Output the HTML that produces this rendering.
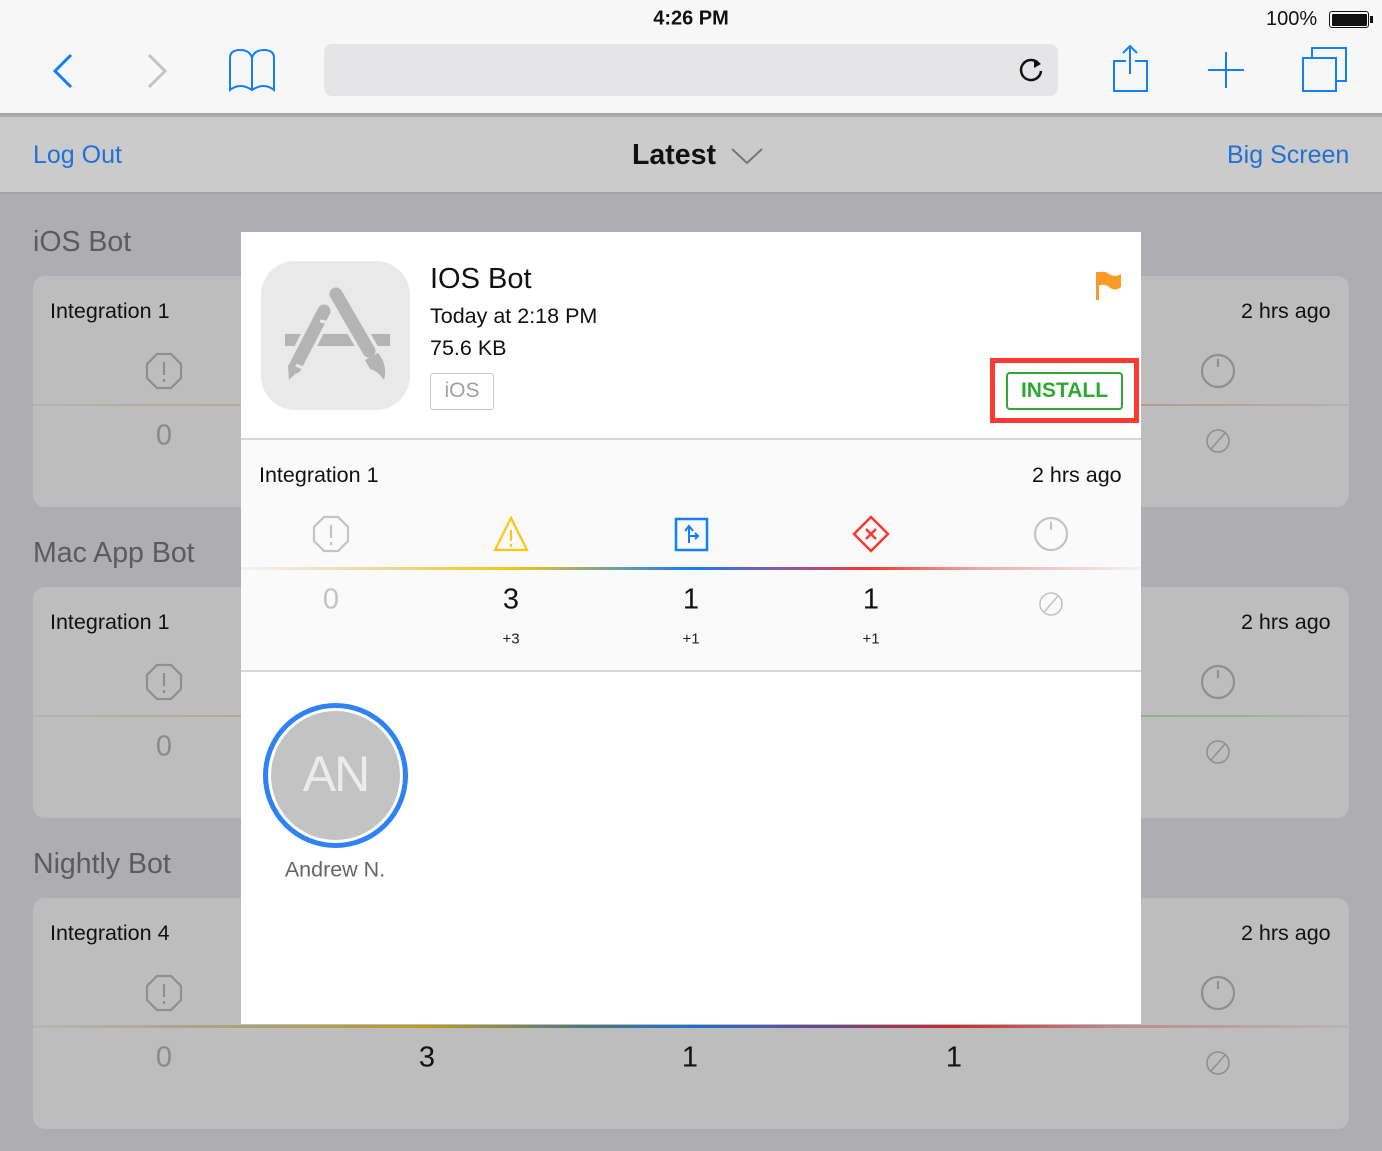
<!DOCTYPE html>
<html><head><meta charset="utf-8"><style>
*{margin:0;padding:0;box-sizing:border-box}
body{width:1382px;height:1151px;position:relative;overflow:hidden;background:#aeadb2;font-family:"Liberation Sans",sans-serif;}
.a{position:absolute}
.c{position:absolute;transform:translate(-50%,-50%);text-align:center;white-space:nowrap}
.card{position:absolute;left:33px;width:1316px;height:231px;background:#bdbdbd;border-radius:12px}
.sec{position:absolute;left:33px;font-size:28.5px;color:#5c5c5e}
.it{font-size:21.5px;color:#111}
.gray{color:#8a8a8a}
</style></head><body>
<div class="a" style="left:0;top:0;width:1382px;height:115px;background:#f7f7f7;border-bottom:2px solid #a6a6a6"></div>
<div class="c" style="left:691px;top:19px;font-size:20px;font-weight:bold;color:#111">4:26 PM</div>
<div class="a" style="left:1266px;top:8px;font-size:20px;color:#111">100%</div>
<div class="a" style="left:1329px;top:11px;width:40px;height:17px;border:1.5px solid #111;border-radius:3px;padding:1.5px"><div style="width:100%;height:100%;background:#111;border-radius:1px"></div></div>
<div class="a" style="left:1370px;top:16px;width:3px;height:7px;background:#111"></div>
<svg class="a" style="left:0;top:0" width="1382" height="115">
<g fill="none" stroke="#147efb" stroke-width="2.5">
<path d="M71 55 L55 71 L71 87" stroke-width="3"/>
<path d="M230 58 Q230 50 240 50 Q250 50 252 58 Q254 50 264 50 Q274 50 274 58 L274 90 Q264 82 252 90 Q240 82 230 90 Z" stroke-width="2"/>
<path d="M252 58 L252 90" stroke-width="2"/>
<path d="M1126 61 L1114 61 L1114 91 L1147 91 L1147 61 L1135 61" stroke-width="2"/>
<path d="M1130 46 L1130 74 M1123 53 L1130 46 L1137 53" stroke-width="2"/>
<path d="M1226 52 L1226 88 M1208 70 L1244 70" stroke-width="2"/>
<rect x="1303" y="58" width="33" height="33" stroke-width="2"/>
<path d="M1312 58 L1312 48 L1346 48 L1346 81 L1336 81" stroke-width="2"/>
</g>
<path d="M149 55 L165 71 L149 87" fill="none" stroke="#c4c4c4" stroke-width="3"/>
</svg>
<div class="a" style="left:324px;top:44px;width:734px;height:52px;background:#e5e5e7;border-radius:8px"></div>
<svg class="a" style="left:1017px;top:55px" width="30" height="30"><path d="M22 9 A10 10 0 1 0 24 16" fill="none" stroke="#111" stroke-width="2.5"/><path d="M17 4 L24 9 L17 13 Z" fill="#111"/></svg>
<div class="a" style="left:0;top:117px;width:1382px;height:77px;background:#cbcbcb;border-bottom:2px solid #a3a3a3"></div>
<div class="a" style="left:33px;top:141px;font-size:25px;color:#2271d6">Log Out</div>
<div class="a" style="left:1227px;top:141px;font-size:25px;color:#2271d6">Big Screen</div>
<div class="a" style="left:632px;top:139px;font-size:28.5px;font-weight:bold;color:#111">Latest</div>
<svg class="a" style="left:730px;top:146px" width="34" height="20"><path d="M2 3 L17 17 L32 3" fill="none" stroke="#777" stroke-width="2"/></svg>

<div class="sec" style="top:226px">iOS Bot</div>
<div class="sec" style="top:537px">Mac App Bot</div>
<div class="sec" style="top:848px">Nightly Bot</div>

<div class="card" style="top:276px"></div>
<div class="card" style="top:587px"></div>
<div class="card" style="top:898px"></div>

<div class="a" style="left:33px;top:404px;width:1316px;height:2px;background:linear-gradient(90deg,rgba(0,0,0,0.06),#b4a98a 17%,#b89a90 85%,#b89a9a 88%,rgba(0,0,0,0.06))"></div>
<div class="a" style="left:33px;top:715px;width:1316px;height:2px;background:linear-gradient(90deg,rgba(0,0,0,0.06),#b2aa8a 17%,#8faf88 84%,rgba(0,0,0,0.06))"></div>
<div class="a" style="left:33px;top:1025px;width:1316px;height:3px;background:linear-gradient(90deg,rgba(0,0,0,0.04),#a9a27e 14%,#c09a1c 30%,#4a7a80 42%,#1b6fd0 50%,#6a4a90 60%,#cc2a2a 70%,#c28888 82%,rgba(0,0,0,0.04))"></div>

<div class="a it" style="left:50px;top:299px">Integration 1</div>
<div class="a it" style="left:50px;top:610px">Integration 1</div>
<div class="a it" style="left:50px;top:921px">Integration 4</div>
<div class="a it" style="left:1241px;top:299px">2 hrs ago</div>
<div class="a it" style="left:1241px;top:610px">2 hrs ago</div>
<div class="a it" style="left:1241px;top:921px">2 hrs ago</div>

<svg class="a" style="left:0;top:0" width="1382" height="1151">
<defs>
<g id="oct"><polygon points="-7,-17 7,-17 17,-7 17,7 7,17 -7,17 -17,7 -17,-7" fill="none" stroke-width="2.2"/><path d="M0 -9 L0 4 M0 8 L0 11" stroke-width="2.2"/></g>
<g id="clk"><circle r="16" fill="none" stroke-width="2.2"/><path d="M0 -12 L0 -4" stroke-width="2.2"/></g>
<g id="sl"><circle r="11" fill="none" stroke-width="1.6"/><path d="M-7 8 L7 -8" stroke-width="1.6"/></g>
</defs>
<g stroke="#8f8f8f">
<use href="#oct" x="164" y="371"/><use href="#oct" x="164" y="682"/><use href="#oct" x="164" y="993"/>
<use href="#clk" x="1218" y="371"/><use href="#clk" x="1218" y="682"/><use href="#clk" x="1218" y="993"/>
<use href="#sl" x="1218" y="441"/><use href="#sl" x="1218" y="752"/><use href="#sl" x="1218" y="1063"/>
</g>
</svg>
<div class="c gray" style="left:164px;top:436px;font-size:29px">0</div>
<div class="c gray" style="left:164px;top:747px;font-size:29px">0</div>
<div class="c gray" style="left:164px;top:1058px;font-size:29px">0</div>
<div class="c" style="left:427px;top:1058px;font-size:29px;color:#111">3</div>
<div class="c" style="left:690px;top:1058px;font-size:29px;color:#111">1</div>
<div class="c" style="left:954px;top:1058px;font-size:29px;color:#111">1</div>

<div class="a" style="left:241px;top:232px;width:900px;height:792px;background:#fff"></div>
<div class="a" style="left:241px;top:438px;width:900px;height:234px;background:#fafafa;border-top:2px solid #d6d6d6;border-bottom:2px solid #d6d6d6"></div>
<div class="a" style="left:261px;top:261px;width:149px;height:149px;background:#e9e9e9;border-radius:34px"></div>
<svg class="a" style="left:261px;top:261px" width="150" height="150">
<rect x="24" y="73" width="105" height="12" fill="#b4b4b4"/>
<line x1="34" y1="106" x2="63" y2="50" stroke="#e9e9e9" stroke-width="20" stroke-linecap="round"/>
<line x1="34" y1="106" x2="63" y2="50" stroke="#b4b4b4" stroke-width="13" stroke-linecap="round"/>
<path d="M28 119 L27 104 L38 109 Z" fill="#b4b4b4"/>
<line x1="75" y1="33" x2="111" y2="95" stroke="#e9e9e9" stroke-width="20" stroke-linecap="round"/>
<line x1="75" y1="33" x2="108" y2="90" stroke="#b4b4b4" stroke-width="13" stroke-linecap="round"/>
<path d="M104 99 L117 92 Q127 104 123 119 Q117 110 109 108 Z" fill="#b4b4b4"/>
<line x1="35" y1="104" x2="44" y2="108" stroke="#e9e9e9" stroke-width="3"/>
<line x1="59" y1="60" x2="70" y2="62" stroke="#e9e9e9" stroke-width="3"/>
</svg>
<div class="a" style="left:430px;top:263px;font-size:29px;color:#111">IOS Bot</div>
<div class="a" style="left:430px;top:304px;font-size:21.5px;color:#111">Today at 2:18 PM</div>
<div class="a" style="left:430px;top:336px;font-size:21.5px;color:#111">75.6 KB</div>
<div class="a" style="left:430px;top:373px;width:64px;height:37px;border:1.5px solid #c8c8c8;border-radius:3px;font-size:21px;color:#a0a0a0;text-align:center;line-height:34px">iOS</div>
<svg class="a" style="left:1094px;top:270px" width="30" height="32"><path d="M2 2 L5 2 L5 30 L2 30 Z" fill="#fb9a27"/><path d="M3 3 Q10 0 15 4 Q21 8 27 4 L27 17 Q21 22 15 17 Q10 13 3 16 Z" fill="#fb9a27"/></svg>
<div class="a" style="left:990px;top:358px;width:149px;height:65px;border:5px solid #fd3a32"></div>
<div class="a" style="left:1006px;top:372px;width:117px;height:38px;border:2px solid #2ea830;border-radius:4px;color:#2ea830;font-weight:bold;font-size:21px;text-align:center;line-height:34px">INSTALL</div>

<div class="a it" style="left:259px;top:463px">Integration 1</div>
<div class="a it" style="left:1032px;top:463px">2 hrs ago</div>
<div class="a" style="left:241px;top:567px;width:900px;height:3px;background:linear-gradient(90deg,rgba(0,0,0,0.03),#ecdcb0 13%,#f5c518 30%,#6aa0a0 42%,#1a7af8 50%,#8a58a8 60%,#f53a30 70%,#eeaaaa 82%,rgba(0,0,0,0.03))"></div>
<svg class="a" style="left:0;top:0" width="1382" height="1151">
<g stroke="#c4c4c4"><use href="#oct" x="331" y="534"/><use href="#clk" x="1051" y="534"/><use href="#sl" x="1051" y="604"/></g>
<path d="M511 518 L527 550 L495 550 Z" fill="none" stroke="#fdc70e" stroke-width="2.2"/>
<path d="M511 530 L511 541 M511 544 L511 547" stroke="#fdc70e" stroke-width="2"/>
<rect x="676" y="519" width="31" height="31" fill="none" stroke="#147efb" stroke-width="2.5"/>
<path d="M689 543 L689 527 M685 531 L689 526 L693 531 M689 536 L698 536 M695 533 L698 536 L695 539" fill="none" stroke="#147efb" stroke-width="2"/>
<path d="M871 517 L888 534 L871 551 L854 534 Z" fill="none" stroke="#f53a30" stroke-width="2.5"/>
<path d="M866 529 L876 539 M876 529 L866 539" stroke="#f53a30" stroke-width="2.5"/>
</svg>
<div class="c" style="left:331px;top:600px;font-size:29px;color:#c4c4c4">0</div>
<div class="c" style="left:511px;top:600px;font-size:29px;color:#111">3</div>
<div class="c" style="left:691px;top:600px;font-size:29px;color:#111">1</div>
<div class="c" style="left:871px;top:600px;font-size:29px;color:#111">1</div>
<div class="c" style="left:511px;top:639px;font-size:15px;color:#222">+3</div>
<div class="c" style="left:691px;top:639px;font-size:15px;color:#222">+1</div>
<div class="c" style="left:871px;top:639px;font-size:15px;color:#222">+1</div>

<div class="a" style="left:263px;top:703px;width:145px;height:145px;border-radius:50%;border:5px solid #2d82f5;padding:3px;background:#fff"><div style="width:100%;height:100%;border-radius:50%;background:#c3c3c3;color:#ececec;font-size:50px;text-align:center;line-height:127px;letter-spacing:-2px">AN</div></div>
<div class="c" style="left:335px;top:870px;font-size:21.5px;color:#666">Andrew N.</div>
</body></html>
